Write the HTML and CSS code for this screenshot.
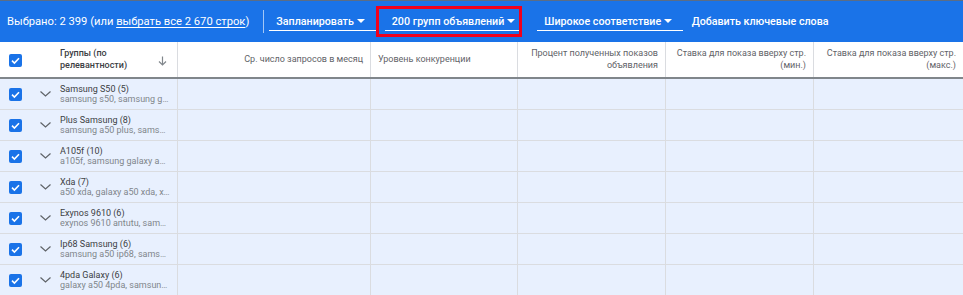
FILE: index.html
```html
<!DOCTYPE html>
<html lang="ru">
<head>
<meta charset="utf-8">
<title>Группы объявлений</title>
<link rel="stylesheet" href="styles.css">
</head>
<body>
<div class="page">
  <div class="toolbar">
    <span class="selected">Выбрано: 2 399 (или <span class="link">выбрать все 2 670 строк</span>)</span>
    <span class="sep"></span>
    <span class="dd dd-plan">Запланировать<span class="caret"></span></span>
    <span class="dd dd-groups">200 групп объявлений<span class="caret"></span></span>
    <span class="dd dd-match">Широкое соответствие<span class="caret"></span></span>
    <span class="action">Добавить ключевые слова</span>
    <span class="highlight"></span>
  </div>

  <div class="table">
    <div class="row head">
      <div class="cell first">
        <span class="cb"><svg viewBox="0 0 13 13" width="13" height="13"><path d="M3 6.7 L5.4 9 L10 4.3" fill="none" stroke="#fff" stroke-width="1.6"/></svg></span>
        <span class="htitle">Группы (по<br>релевантности)</span>
        <svg class="sort" viewBox="0 0 9 10" width="9" height="10"><path d="M4.5 0.5 V9 M1 5.5 L4.5 9 L8 5.5" fill="none" stroke="#80868b" stroke-width="1.2"/></svg>
      </div>
      <div class="cell hnum">Ср. число запросов в месяц</div>
      <div class="cell hleft">Уровень конкуренции</div>
      <div class="cell hnum">Процент полученных показов<br>объявления</div>
      <div class="cell hnum">Ставка для показа вверху стр.<br>(мин.)</div>
      <div class="cell hnum">Ставка для показа вверху стр.<br>(макс.)</div>
    </div>

    <div class="row">
      <div class="cell first">
        <span class="cb"><svg viewBox="0 0 13 13" width="13" height="13"><path d="M3 6.7 L5.4 9 L10 4.3" fill="none" stroke="#fff" stroke-width="1.6"/></svg></span>
        <svg class="chev" viewBox="0 0 11 6" width="11" height="6"><path d="M0.5 0.5 L5.5 5 L10.5 0.5" fill="none" stroke="#5f6368" stroke-width="1.2"/></svg>
        <span class="gtext"><span class="gname">Samsung S50 (5)</span><span class="gsub">samsung s50, samsung galaxy s50</span></span>
      </div>
      <div class="cell"></div><div class="cell"></div><div class="cell"></div><div class="cell"></div><div class="cell"></div>
    </div>

    <div class="row">
      <div class="cell first">
        <span class="cb"><svg viewBox="0 0 13 13" width="13" height="13"><path d="M3 6.7 L5.4 9 L10 4.3" fill="none" stroke="#fff" stroke-width="1.6"/></svg></span>
        <svg class="chev" viewBox="0 0 11 6" width="11" height="6"><path d="M0.5 0.5 L5.5 5 L10.5 0.5" fill="none" stroke="#5f6368" stroke-width="1.2"/></svg>
        <span class="gtext"><span class="gname">Plus Samsung (8)</span><span class="gsub">samsung a50 plus, samsung plus</span></span>
      </div>
      <div class="cell"></div><div class="cell"></div><div class="cell"></div><div class="cell"></div><div class="cell"></div>
    </div>

    <div class="row">
      <div class="cell first">
        <span class="cb"><svg viewBox="0 0 13 13" width="13" height="13"><path d="M3 6.7 L5.4 9 L10 4.3" fill="none" stroke="#fff" stroke-width="1.6"/></svg></span>
        <svg class="chev" viewBox="0 0 11 6" width="11" height="6"><path d="M0.5 0.5 L5.5 5 L10.5 0.5" fill="none" stroke="#5f6368" stroke-width="1.2"/></svg>
        <span class="gtext"><span class="gname">A105f (10)</span><span class="gsub">a105f, samsung galaxy a105f</span></span>
      </div>
      <div class="cell"></div><div class="cell"></div><div class="cell"></div><div class="cell"></div><div class="cell"></div>
    </div>

    <div class="row">
      <div class="cell first">
        <span class="cb"><svg viewBox="0 0 13 13" width="13" height="13"><path d="M3 6.7 L5.4 9 L10 4.3" fill="none" stroke="#fff" stroke-width="1.6"/></svg></span>
        <svg class="chev" viewBox="0 0 11 6" width="11" height="6"><path d="M0.5 0.5 L5.5 5 L10.5 0.5" fill="none" stroke="#5f6368" stroke-width="1.2"/></svg>
        <span class="gtext"><span class="gname">Xda (7)</span><span class="gsub">a50 xda, galaxy a50 xda, xda a50</span></span>
      </div>
      <div class="cell"></div><div class="cell"></div><div class="cell"></div><div class="cell"></div><div class="cell"></div>
    </div>

    <div class="row">
      <div class="cell first">
        <span class="cb"><svg viewBox="0 0 13 13" width="13" height="13"><path d="M3 6.7 L5.4 9 L10 4.3" fill="none" stroke="#fff" stroke-width="1.6"/></svg></span>
        <svg class="chev" viewBox="0 0 11 6" width="11" height="6"><path d="M0.5 0.5 L5.5 5 L10.5 0.5" fill="none" stroke="#5f6368" stroke-width="1.2"/></svg>
        <span class="gtext"><span class="gname">Exynos 9610 (6)</span><span class="gsub">exynos 9610 antutu, samsung exynos</span></span>
      </div>
      <div class="cell"></div><div class="cell"></div><div class="cell"></div><div class="cell"></div><div class="cell"></div>
    </div>

    <div class="row">
      <div class="cell first">
        <span class="cb"><svg viewBox="0 0 13 13" width="13" height="13"><path d="M3 6.7 L5.4 9 L10 4.3" fill="none" stroke="#fff" stroke-width="1.6"/></svg></span>
        <svg class="chev" viewBox="0 0 11 6" width="11" height="6"><path d="M0.5 0.5 L5.5 5 L10.5 0.5" fill="none" stroke="#5f6368" stroke-width="1.2"/></svg>
        <span class="gtext"><span class="gname">Ip68 Samsung (6)</span><span class="gsub">samsung a50 ip68, samsung ip68</span></span>
      </div>
      <div class="cell"></div><div class="cell"></div><div class="cell"></div><div class="cell"></div><div class="cell"></div>
    </div>

    <div class="row">
      <div class="cell first">
        <span class="cb"><svg viewBox="0 0 13 13" width="13" height="13"><path d="M3 6.7 L5.4 9 L10 4.3" fill="none" stroke="#fff" stroke-width="1.6"/></svg></span>
        <svg class="chev" viewBox="0 0 11 6" width="11" height="6"><path d="M0.5 0.5 L5.5 5 L10.5 0.5" fill="none" stroke="#5f6368" stroke-width="1.2"/></svg>
        <span class="gtext"><span class="gname">4pda Galaxy (6)</span><span class="gsub">galaxy a50 4pda, samsung 4pda</span></span>
      </div>
      <div class="cell"></div><div class="cell"></div><div class="cell"></div><div class="cell"></div><div class="cell"></div>
    </div>
  </div>
</div>
</body>
</html>
```

FILE: styles.css
```css
* { box-sizing: border-box; }
html, body { margin: 0; padding: 0; }
body {
  font-family: Roboto, "Noto Sans", Arial, sans-serif;
  background: #fff;
  width: 963px;
  height: 295px;
  overflow: hidden;
}
.page { width: 963px; }

.toolbar {
  position: relative;
  height: 42px;
  background: #1a73e8;
  border-top: 1px solid #5b6d86;
  display: flex;
  align-items: center;
  padding-left: 7px;
  color: #fff;
  font-size: 11.2px;
}
.selected { white-space: nowrap; }
.link { text-decoration: underline; text-underline-offset: 2px; }
.sep {
  width: 1px;
  height: 23px;
  background: rgba(255,255,255,0.6);
  margin-left: 14px;
  margin-right: 5px;
}
.dd {
  display: flex;
  align-items: center;
  height: 19px;
  padding: 0 11px 0 7px;
  border-bottom: 1px solid #fff;
  white-space: nowrap;
  font-size: 10.7px;
  font-weight: 500;
}
.dd-groups { margin-left: 9px; padding-right: 7px; }
.dd-match { margin-left: 15px; }
.caret {
  width: 0; height: 0;
  border-left: 4px solid transparent;
  border-right: 4px solid transparent;
  border-top: 4px solid #fff;
  margin-left: 3px;
}
.action { margin-left: 8.5px; white-space: nowrap; font-size: 10.7px; font-weight: 500; }
.highlight {
  position: absolute;
  left: 376px;
  top: 5px;
  width: 146px;
  height: 31px;
  border: 3px solid #f0001c;
}

.row {
  display: grid;
  grid-template-columns: 178px 193px 147px 148px 148px 149px;
  height: 31px;
  background: #e8f0fe;
  border-bottom: 1px solid #dadce0;
}
.row.head {
  height: 37px;
  background: #fff;
  border-bottom: 2px solid #80868b;
}
.cell {
  border-right: 1px solid #dadce0;
  display: flex;
  align-items: center;
  min-width: 0;
}
.cell:last-child { border-right: none; }
.first { padding-left: 9px; }
.cb {
  width: 13px; height: 13px;
  border-radius: 2px;
  background: #1a73e8;
  display: inline-flex;
  flex: none;
}
.head .first .cb { margin-top: 2px; }
.htitle {
  margin-left: 38px;
  font-size: 9px;
  line-height: 11.5px;
  font-weight: 500;
  color: #3c4043;
  flex: 1;
}
.sort { margin-right: 10px; margin-top: 2px; flex: none; }
.hnum, .hleft {
  font-size: 9px;
  line-height: 11.5px;
  color: #5f6368;
  padding: 0 7px;
}
.hnum { justify-content: flex-end; text-align: right; }
.hleft { justify-content: flex-start; }

.chev { margin-left: 18px; flex: none; margin-top: -1px; }
.gtext {
  margin-left: 9px;
  display: flex;
  flex-direction: column;
  min-width: 0;
  width: 110px;
  font-size: 9px;
  line-height: 10.5px;
}
.gname { color: #3c4043; white-space: nowrap; }
.gsub {
  color: #80868b;
  white-space: nowrap;
  overflow: hidden;
  text-overflow: ellipsis;
}
```
